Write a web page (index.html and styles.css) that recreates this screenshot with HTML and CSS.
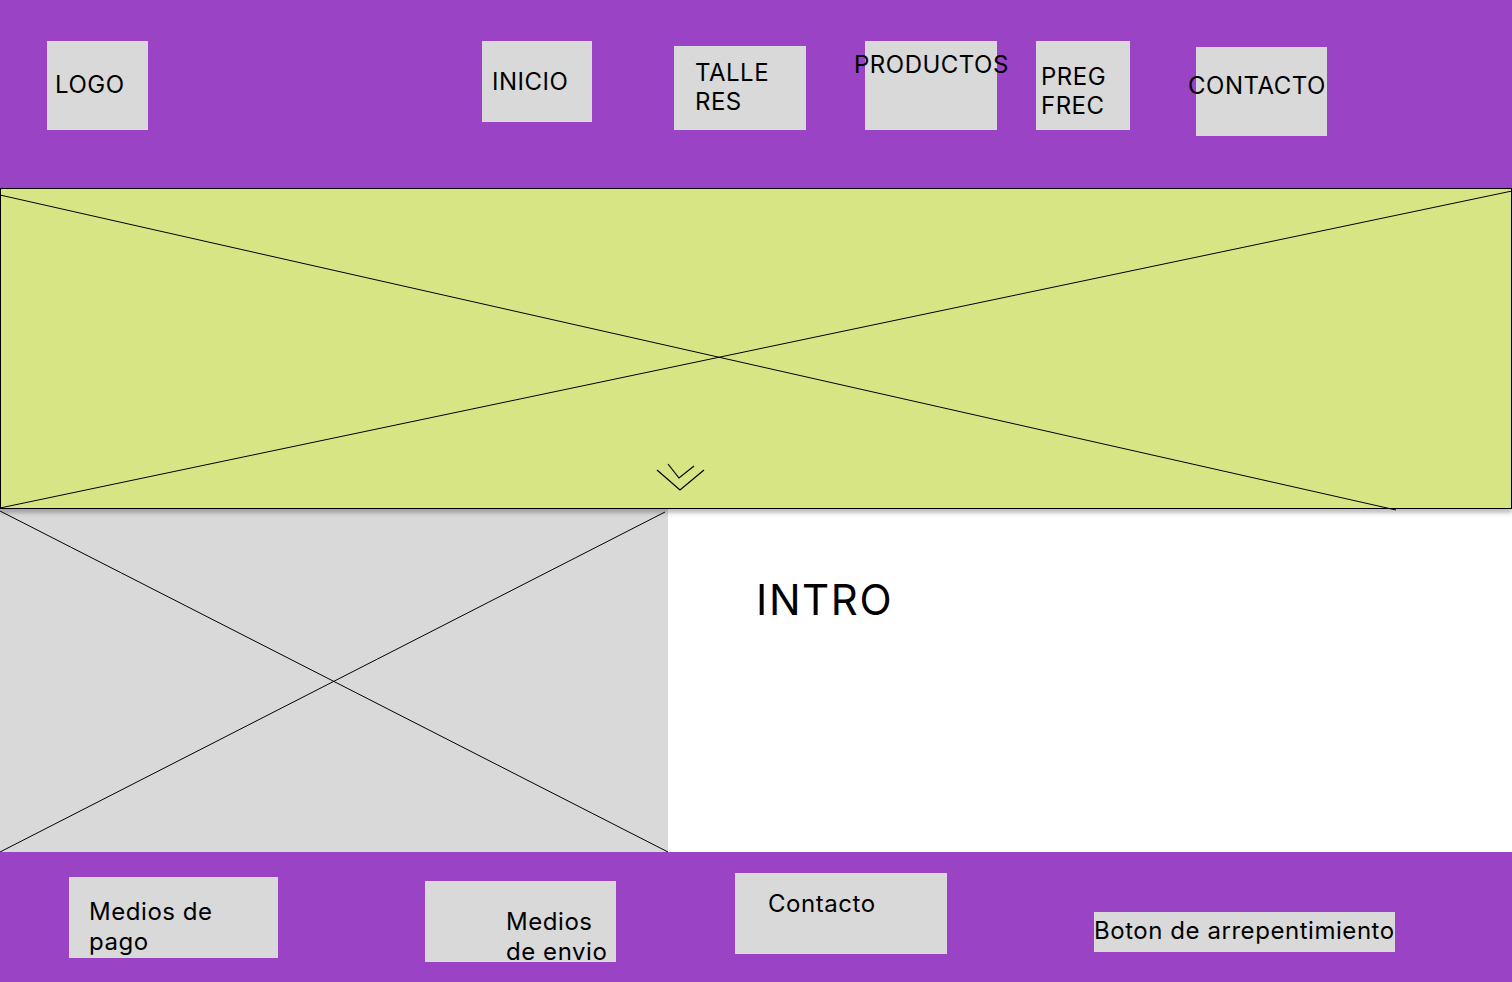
FILE: index.html
```html
<!DOCTYPE html>
<html lang="es">
<head>
<meta charset="utf-8">
<title>Wireframe</title>
<link rel="stylesheet" href="styles.css">
</head>
<body>
<header class="topbar">
  <div class="nav-box nav-logo"><span class="nav-text">LOGO</span></div>
  <div class="nav-box nav-inicio"><span class="nav-text">INICIO</span></div>
  <div class="nav-box nav-talleres"><span class="nav-text">TALLE<br>RES</span></div>
  <div class="nav-box nav-productos"><span class="nav-text">PRODUCTOS</span></div>
  <div class="nav-box nav-preg"><span class="nav-text">PREG<br>FREC</span></div>
  <div class="nav-box nav-contacto"><span class="nav-text">CONTACTO</span></div>
</header>

<section class="hero">
  <svg class="hero-lines" width="1512" height="321" viewBox="0 0 1512 321">
    <line x1="0" y1="7" x2="1396" y2="322" stroke="#000" stroke-width="1"/>
    <line x1="0" y1="320" x2="1512" y2="3" stroke="#000" stroke-width="1"/>
    <polyline points="657,282 680,302 704,282" fill="none" stroke="#000" stroke-width="1.2"/>
    <polyline points="668,276 679,290 694,278" fill="none" stroke="#000" stroke-width="1.2"/>
  </svg>
</section>

<main class="intro">
  <div class="intro-image">
    <svg class="intro-lines" viewBox="0 0 668 343" preserveAspectRatio="none">
      <line x1="0" y1="2" x2="668" y2="343" stroke="#000" stroke-width="1"/>
      <line x1="0" y1="343" x2="665" y2="3" stroke="#000" stroke-width="1"/>
    </svg>
  </div>
  <div class="intro-copy">
    <h1 class="intro-title">INTRO</h1>
  </div>
</main>

<footer class="bottombar">
  <div class="foot-box foot-pago"><span class="foot-text">Medios de<br>pago</span></div>
  <div class="foot-box foot-envio"><span class="foot-text">Medios<br>de envio</span></div>
  <div class="foot-box foot-contacto"><span class="foot-text">Contacto</span></div>
  <div class="foot-box foot-boton"><span class="foot-text">Boton de arrepentimiento</span></div>
</footer>
</body>
</html>
```

FILE: styles.css
```css
* { box-sizing: border-box; }

html, body {
  margin: 0;
  padding: 0;
  width: 1512px;
  height: 982px;
  overflow: hidden;
  background: #ffffff;
  font-family: Inter, "Noto Sans", sans-serif;
  color: #000;
}

/* ---------- header ---------- */
.topbar {
  display: flex;
  align-items: flex-start;
  height: 188px;
  background: #9a43c5;
  padding-left: 47px;
}

.nav-box {
  background: #d9d9d9;
  flex: none;
}

.nav-text {
  display: block;
  font-size: 24px;
  line-height: 29px;
  letter-spacing: 0.5px;
  white-space: nowrap;
}

.nav-logo { width: 101px; height: 89px; margin-top: 41px; }
.nav-logo .nav-text { padding: 29px 0 0 8px; }

.nav-inicio { width: 110px; height: 81px; margin-top: 41px; margin-left: 334px; }
.nav-inicio .nav-text { padding: 26px 0 0 10px; }

.nav-talleres { width: 132px; height: 84px; margin-top: 46px; margin-left: 82px; }
.nav-talleres .nav-text { padding: 12px 0 0 21px; }

.nav-productos { width: 132px; height: 89px; margin-top: 41px; margin-left: 59px; }
.nav-productos .nav-text { padding-top: 9px; margin-left: -11px; }

.nav-preg { width: 94px; height: 89px; margin-top: 41px; margin-left: 39px; }
.nav-preg .nav-text { padding: 21px 0 0 5px; }

.nav-contacto { width: 131px; height: 89px; margin-top: 47px; margin-left: 66px; }
.nav-contacto .nav-text { padding-top: 24px; margin-left: -8px; }

/* ---------- hero ---------- */
.hero {
  position: relative;
  height: 321px;
  background: #d8e585;
  border: 1px solid #000;
  box-shadow: 0 4px 4px rgba(0, 0, 0, 0.25);
  z-index: 1;
}

.hero-lines {
  position: absolute;
  left: -1px;
  top: -1px;
  overflow: visible;
}

/* ---------- intro ---------- */
.intro {
  display: flex;
  height: 343px;
}

.intro-image {
  position: relative;
  width: 668px;
  height: 343px;
  background: #d9d9d9;
  flex: none;
}

.intro-lines {
  position: absolute;
  inset: 0;
  width: 100%;
  height: 100%;
}

.intro-copy {
  flex: 1;
  padding: 65px 0 0 88px;
}

.intro-title {
  margin: 0;
  font-size: 42px;
  line-height: 51px;
  font-weight: 400;
  letter-spacing: 1.6px;
}

/* ---------- footer ---------- */
.bottombar {
  display: flex;
  align-items: flex-start;
  height: 130px;
  background: #9a43c5;
  padding-left: 69px;
}

.foot-box {
  background: #d9d9d9;
  flex: none;
}

.foot-text {
  display: block;
  font-size: 24px;
  line-height: 30px;
  letter-spacing: 0.55px;
  white-space: nowrap;
}

.foot-pago { width: 209px; height: 81px; margin-top: 25px; }
.foot-pago .foot-text { padding: 20px 0 0 20px; }

.foot-envio { width: 191px; height: 81px; margin-top: 29px; margin-left: 147px; }
.foot-envio .foot-text { padding: 26px 0 0 81px; }

.foot-contacto { width: 212px; height: 81px; margin-top: 21px; margin-left: 119px; }
.foot-contacto .foot-text { padding: 16px 0 0 33px; }

.foot-boton { width: 301px; height: 40px; margin-top: 60px; margin-left: 147px; }
.foot-boton .foot-text { padding: 4px 0 0 0; }
```
